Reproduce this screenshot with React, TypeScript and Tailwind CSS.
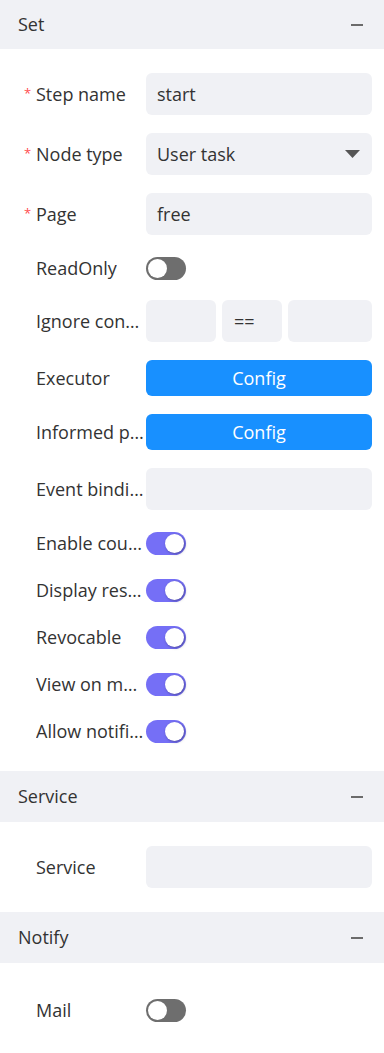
import React from "react";

const font = { fontFamily: '"Open Sans", "Noto Sans", sans-serif' };

const SectionHeader = ({ title, h }: { title: string; h: string }) => (
  <div className={"flex items-center justify-between bg-[#f0f1f5] pl-[18px] pr-[21px] " + h}>
    <span className="text-[18px] text-[#333]">{title}</span>
    <div className="h-[2px] w-3 bg-[#6b6b6b]" />
  </div>
);

type LabelProps = { text: string; required?: boolean };

const Label = ({ text, required }: LabelProps) => (
  <div className="flex w-[146px] shrink-0 items-center pl-6">
    <span className="w-3 shrink-0 self-start pt-[6px] text-[13px] leading-none text-[#ff4d4f]">
      {required ? "*" : ""}
    </span>
    <span className="truncate text-[18px] text-[#333]">{text}</span>
  </div>
);

const Input = ({ value }: { value?: string }) => (
  <div className="flex h-[42px] flex-1 items-center rounded-md bg-[#f0f1f5] px-[11px] text-[18px] text-[#333]">
    {value}
  </div>
);

const Toggle = ({ on }: { on?: boolean }) => (
  <div
    className={
      on
        ? "flex h-[23px] w-10 items-center justify-end rounded-full bg-[#756ff6] px-[2px]"
        : "flex h-[23px] w-10 items-center justify-start rounded-full bg-[#6e6e6e] px-[2px]"
    }
  >
    <div
      className={
        on
          ? "h-[19px] w-[19px] rounded-full bg-white shadow-[1px_1px_3px_rgba(0,0,0,0.35)]"
          : "h-[19px] w-[19px] rounded-full bg-white"
      }
    />
  </div>
);

const ToggleRow = ({ label, on }: { label: string; on?: boolean }) => (
  <div className="mb-[17px] flex h-[30px] items-center pr-3">
    <Label text={label} />
    <Toggle on={on} />
  </div>
);

const Button = () => (
  <button className="flex h-9 flex-1 items-center justify-center rounded-md bg-[#1890ff] text-[18px] text-white">
    Config
  </button>
);

export default function App() {
  return (
    <div className="w-[384px] bg-white" style={font}>
      {/* Set */}
      <SectionHeader title="Set" h="h-[49px]" />
      <div className="pt-6 pb-2">
        <div className="mb-[18px] flex items-center pr-3">
          <Label text="Step name" required />
          <Input value="start" />
        </div>
        <div className="mb-[18px] flex items-center pr-3">
          <Label text="Node type" required />
          <div className="flex h-[42px] flex-1 items-center justify-between rounded-md bg-[#f0f1f5] pl-[11px] pr-3 text-[18px] text-[#333]">
            <span>User task</span>
            <svg width="15" height="8" viewBox="0 0 15 8">
              <path d="M0 0 H15 L7.5 8 Z" fill="#555" />
            </svg>
          </div>
        </div>
        <div className="mb-[18px] flex items-center pr-3">
          <Label text="Page" required />
          <Input value="free" />
        </div>
        <ToggleRow label="ReadOnly" />
        <div className="mb-[18px] flex items-center pr-3">
          <Label text="Ignore condition" />
          <div className="flex flex-1 gap-[6px]">
            <div className="h-[42px] w-[70px] rounded-md bg-[#f0f1f5]" />
            <div className="flex h-[42px] w-[60px] items-center rounded-md bg-[#f0f1f5] pl-3 text-[18px] text-[#333]">
              ==
            </div>
            <div className="h-[42px] flex-1 rounded-md bg-[#f0f1f5]" />
          </div>
        </div>
        <div className="mb-[18px] flex items-center pr-3">
          <Label text="Executor" />
          <Button />
        </div>
        <div className="mb-[18px] flex items-center pr-3">
          <Label text="Informed person" />
          <Button />
        </div>
        <div className="mb-[18px] flex items-center pr-3">
          <Label text="Event binding" />
          <Input />
        </div>
        <ToggleRow label="Enable countersign" on />
        <ToggleRow label="Display result" on />
        <ToggleRow label="Revocable" on />
        <ToggleRow label="View on mobile" on />
        <ToggleRow label="Allow notification" on />
      </div>

      {/* Service */}
      <SectionHeader title="Service" h="h-[51px]" />
      <div className="pt-6 pb-[6px]">
        <div className="mb-[18px] flex items-center pr-3">
          <Label text="Service" />
          <Input />
        </div>
      </div>

      {/* Notify */}
      <SectionHeader title="Notify" h="h-[51px]" />
      <div className="pt-[26px] pb-6">
        <div className="flex h-[42px] items-center pr-3">
          <Label text="Mail" />
          <Toggle />
        </div>
      </div>
    </div>
  );
}
